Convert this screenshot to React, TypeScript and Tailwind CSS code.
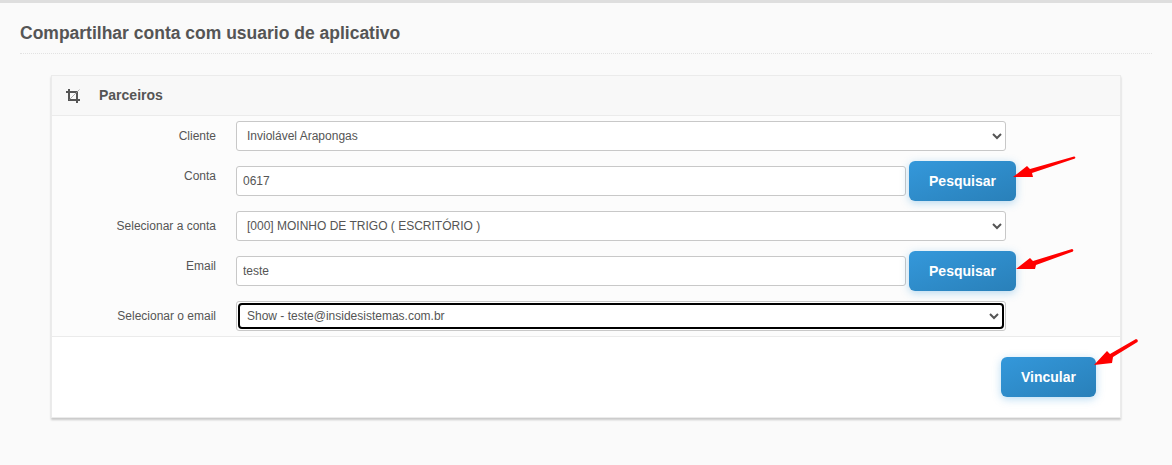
const field =
  "h-[30px] bg-white border border-[#c8c8c8] rounded-[3px] text-[12px] text-[#555]";

function Label({ children, top }: { children: string; top?: boolean }) {
  return (
    <label
      className={
        "w-[164px] mr-5 text-right text-[12px] text-[#555] " +
        (top ? "self-start pt-[6px]" : "")
      }
    >
      {children}
    </label>
  );
}

function Choice({ value }: { value: string }) {
  return (
    <select defaultValue={value} className={"w-[770px] pl-[6px] outline-none " + field}>
      <option>{value}</option>
    </select>
  );
}

// select that has keyboard focus: grey box with the black ring inside
function FocusedChoice({ value }: { value: string }) {
  return (
    <div className="w-[770px] h-[30px] p-[1px] border border-[#c8c8c8] rounded-[3px] bg-white">
      <select
        defaultValue={value}
        className="w-full h-full pl-[3px] outline-none bg-white border-2 border-black rounded-[4px] text-[12px] text-[#555]"
      >
        <option>{value}</option>
      </select>
    </div>
  );
}

function BlueButton({ children, wide }: { children: string; wide?: boolean }) {
  return (
    <button
      className={
        "h-10 rounded-[6px] text-white text-[14px] font-bold bg-gradient-to-br from-[#3498db] to-[#2980b9] shadow-[0_2px_8px_rgba(52,152,219,0.35)] " +
        (wide ? "w-[95px]" : "w-[107px]")
      }
    >
      {children}
    </button>
  );
}

function Arrow({ x, y, w, h, d }: { x: number; y: number; w: number; h: number; d: string }) {
  return (
    <svg
      className="absolute pointer-events-none"
      style={{ left: x, top: y }}
      width={w}
      height={h}
      viewBox={`0 0 ${w} ${h}`}
    >
      <path d={d} fill="#ff0000" />
    </svg>
  );
}

function CropIcon() {
  return (
    <svg className="ml-[14px] shrink-0" width="14" height="14" viewBox="0 0 14 14">
      <path d="M2 0h2v10h10v2H2z" fill="#555" />
      <path d="M0 2h12v12h-2V4H0z" fill="#555" />
      <path d="M3.5 10.5 13.5 .5" stroke="#999" strokeWidth="0.8" fill="none" />
    </svg>
  );
}

export default function App() {
  return (
    <div className="relative w-[1172px] h-[465px] overflow-hidden bg-[#fafafa] font-['Liberation_Sans',Arial,sans-serif] border-t-[3px] border-[#dedede]">
      <div className="mx-5 pt-[19px] pb-[8px] border-b border-dotted border-[#e2e2e2]">
        <h1 className="text-[17.5px] leading-[23px] font-bold text-[#555]">
          Compartilhar conta com usuario de aplicativo
        </h1>
      </div>

      <section className="mt-[21px] mx-[51px] w-[1070px] border border-[#ebebeb] bg-white shadow-[0_2px_2px_rgba(0,0,0,0.2)]">
        <header className="h-10 flex items-center bg-[#f8f8f8] border-b border-[#ebebeb] text-[#555]">
          <CropIcon />
          <h2 className="ml-[19px] text-[14px] font-bold">Parceiros</h2>
        </header>

        <div className="flex flex-col gap-[10px] py-[5px] bg-[#fcfcfc] border-b border-[#ebebeb]">
          <div className="flex items-center">
            <Label>Cliente</Label>
            <Choice value="Inviolável Arapongas" />
          </div>
          <div className="flex items-center">
            <Label top>Conta</Label>
            <input readOnly value="0617" className={"w-[670px] px-[6px] outline-none " + field} />
            <div className="ml-[3px]">
              <BlueButton>Pesquisar</BlueButton>
            </div>
          </div>
          <div className="flex items-center">
            <Label>Selecionar a conta</Label>
            <Choice value="[000] MOINHO DE TRIGO ( ESCRITÓRIO )" />
          </div>
          <div className="flex items-center">
            <Label top>Email</Label>
            <input readOnly value="teste" className={"w-[670px] px-[6px] outline-none " + field} />
            <div className="ml-[3px]">
              <BlueButton>Pesquisar</BlueButton>
            </div>
          </div>
          <div className="flex items-center">
            <Label>Selecionar o email</Label>
            <FocusedChoice value="Show - teste@insidesistemas.com.br" />
          </div>
        </div>

        <footer className="flex justify-end pt-5 pb-5 pr-[24px]">
          <BlueButton wide>Vincular</BlueButton>
        </footer>
      </section>

      {/* annotation arrows on top of the screenshot */}
      <Arrow x={1010} y={150} w={68} h={28} d="M3 24 L17 13 L20 16 L64 3.5 Q66 3.5 65 5.5 L22 20 L23 24 Z" />
      <Arrow x={1012} y={243} w={64} h={28} d="M4 23 L18 12 L21 15 L60 3 Q62 3.5 61 5.5 L24 19 L23 23 Z" />
      <Arrow x={1090} y={333} w={50} h={32} d="M4 29 L17 15 L20 18 L46 3 Q48.5 3.5 47.5 6 L23 21 L22 27 Z" />
    </div>
  );
}
